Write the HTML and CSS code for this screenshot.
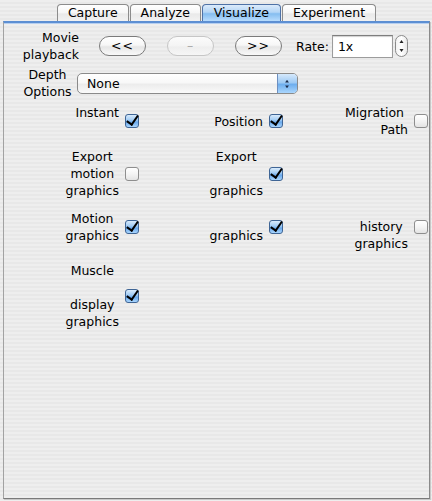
FILE: index.html
```html
<!DOCTYPE html>
<html>
<head>
<meta charset="utf-8">
<link rel="stylesheet" href="styles.css">
</head>
<body>
<div class="window">
  <div class="tabs">
    <div class="tab">Capture</div>
    <div class="tab">Analyze</div>
    <div class="tab tab-active">Visualize</div>
    <div class="tab">Experiment</div>
  </div>
  <div class="panel">
    <div class="row-movie">
      <div class="lbl movie-lbl">Movie<br>playback</div>
      <button class="pill first">&lt;&lt;</button>
      <button class="pill disabled">–</button>
      <button class="pill">&gt;&gt;</button>
      <span class="rate-lbl">Rate:</span>
      <div class="field">1x</div>
      <div class="stepper">
        <svg width="13" height="22" viewBox="0 0 13 22">
          <rect x="0.5" y="0.5" width="12" height="21" rx="6" fill="url(#stepg)" stroke="#8a8a8a"/>
          <defs><linearGradient id="stepg" x1="0" y1="0" x2="1" y2="0"><stop offset="0" stop-color="#f2f2f2"/><stop offset="0.5" stop-color="#ffffff"/><stop offset="1" stop-color="#e6e6e6"/></linearGradient></defs>
          <path d="M4.5 8 L6.5 5 L8.5 8 Z" fill="#222"/>
          <path d="M4.5 14 L6.5 17 L8.5 14 Z" fill="#222"/>
        </svg>
      </div>
    </div>
    <div class="row-depth">
      <div class="lbl depth-lbl">Depth<br>Options</div>
      <div class="popup">
        <span class="popup-text">None</span>
        <span class="popup-arrows">
          <svg width="20" height="20" viewBox="0 0 20 20">
            <path d="M7.5 8.5 L9.5 5.5 L11.5 8.5 Z" fill="#1a2a4a"/>
            <path d="M7.5 11.5 L9.5 14.5 L11.5 11.5 Z" fill="#1a2a4a"/>
          </svg>
        </span>
      </div>
    </div>
    <div class="checks">
      <div class="check-row r1">
        <div class="cell"><span class="clbl">Instant<br>&nbsp;</span><span class="cb on"></span></div>
        <div class="cell"><span class="clbl">Position</span><span class="cb on"></span></div>
        <div class="cell"><span class="clbl right">Migration&nbsp;<br>Path</span><span class="cb"></span></div>
      </div>
      <div class="check-row r2">
        <div class="cell"><span class="clbl">Export<br>motion<br>graphics</span><span class="cb"></span></div>
        <div class="cell"><span class="clbl">Export<br>&nbsp;<br>graphics</span><span class="cb on"></span></div>
        <div class="cell"></div>
      </div>
      <div class="check-row r3">
        <div class="cell"><span class="clbl">Motion<br>graphics</span><span class="cb on"></span></div>
        <div class="cell"><span class="clbl">&nbsp;<br>graphics</span><span class="cb on"></span></div>
        <div class="cell"><span class="clbl">&nbsp;<br>history<br>graphics</span><span class="cb"></span></div>
      </div>
      <div class="check-row r4">
        <div class="cell"><span class="clbl">Muscle<br>&nbsp;<br>display<br>graphics</span><span class="cb on"></span></div>
        <div class="cell"></div>
        <div class="cell"></div>
      </div>
    </div>
  </div>
</div>
<svg width="0" height="0" style="position:absolute">
  <defs>
    <linearGradient id="x" x1="0" y1="0" x2="0" y2="1"><stop offset="0" stop-color="#fff"/></linearGradient>
  </defs>
</svg>
</body>
</html>
```

FILE: styles.css
```css
* { box-sizing: border-box; }
html, body { margin: 0; padding: 0; }
body {
  width: 432px;
  height: 501px;
  font-family: "DejaVu Sans", "Liberation Sans", sans-serif;
  font-size: 12.5px;
  color: #000;
  background: repeating-linear-gradient(to bottom, #eeeeee 0, #eeeeee 2px, #e8e8e8 2px, #e8e8e8 4px);
  overflow: hidden;
}
.window {
  display: flex;
  flex-direction: column;
  height: 501px;
}
.tabs {
  display: flex;
  justify-content: center;
  gap: 1px;
  padding-top: 4px;
  padding-left: 1px;
  height: 21px;
}
.tab {
  height: 17px;
  padding: 0 10px;
  border: 1px solid #8c8c8c;
  border-bottom: 0;
  border-radius: 4px 4px 0 0;
  background: linear-gradient(to bottom, #ffffff 0, #f6f6f6 50%, #e9e9e9 55%, #f2f2f2 100%);
  line-height: 16px;
  white-space: nowrap;
}
.tab-active {
  padding: 0 11px;
  border-color: #4f72a6;
  background: linear-gradient(to bottom, #dcebfb 0, #b3d5f6 45%, #85bdf0 55%, #b8dcfd 100%);
}
.panel {
  flex: 1;
  margin: 0 2px 2px 3px;
  border-top: 2px solid #5d8fd3;
  border-left: 1px solid #a2a2a2;
  border-right: 1px solid #8a8a8a;
  border-bottom: 1px solid #7a7a7a;
  box-shadow: inset 0 1px 0 #b6cff0, 1px 1px 0 #c8c8c8;
  padding-top: 6px;
}
.lbl { line-height: 17px; }
.row-movie {
  display: flex;
  align-items: center;
  height: 34px;
}
.movie-lbl {
  width: 75px;
  text-align: right;
}
.pill {
  width: 47px;
  height: 20px;
  margin-left: 21px;
  padding: 0;
  font: inherit;
  color: #000;
  border: 1px solid #7b7b7b;
  border-radius: 10px;
  background: linear-gradient(to bottom, #ffffff 0, #f7f7f7 45%, #e6e6e6 55%, #f9f9f9 100%);
  line-height: 18px;
  letter-spacing: 1px;
}
.pill.first { margin-left: 20px; }
.pill.disabled {
  color: #a8a8a8;
  border-color: #c6c6c6;
  background: linear-gradient(to bottom, #fbfbfb 0, #f4f4f4 50%, #eeeeee 55%, #f6f6f6 100%);
}
.rate-lbl { margin-left: 14px; }
.field {
  width: 61px;
  height: 23px;
  margin-left: 3px;
  padding-left: 5px;
  background: #fff;
  border: 1px solid #9c9c9c;
  border-top-color: #7e7e7e;
  box-shadow: inset 0 1px 1px #d0d0d0;
  line-height: 21px;
}
.stepper {
  display: flex;
  margin-left: 2px;
}
.row-depth {
  display: flex;
  align-items: center;
  height: 34px;
  margin-top: 3px;
}
.depth-lbl {
  width: 49px;
  margin-left: 19px;
  text-align: center;
}
.popup {
  display: flex;
  align-items: center;
  width: 221px;
  height: 21px;
  margin-left: 5px;
  border: 1px solid #8a8a8a;
  border-radius: 5px;
  background: linear-gradient(to bottom, #ffffff 0, #f8f8f8 45%, #ececec 55%, #fafafa 100%);
  overflow: hidden;
}
.popup-text {
  flex: 1;
  padding-left: 9px;
  line-height: 19px;
}
.popup-arrows {
  display: flex;
  width: 20px;
  height: 19px;
  background: linear-gradient(to bottom, #d6e9fc 0, #9ecaf4 45%, #6eaeee 55%, #aad6fd 100%);
  border-left: 1px solid #6d8fc0;
}
.checks {
  margin-top: 4px;
}
.check-row {
  display: grid;
  grid-template-columns: 135px 144px 145px;
}
.r2 { margin-top: 10px; }
.r3 { margin-top: 2px; }
.r4 { margin-top: 10px; }
.cell {
  display: flex;
  justify-content: flex-end;
  align-items: center;
  gap: 6px;
}
.clbl {
  text-align: center;
  line-height: 17px;
}
.clbl.right { text-align: right; }
.cb {
  position: relative;
  flex: none;
  width: 14px;
  height: 14px;
  border: 1px solid #8e8e8e;
  border-radius: 3px;
  background: linear-gradient(to bottom, #ffffff 0, #f4f4f4 50%, #e4e4e4 100%);
}
.cb.on {
  border-color: #3f6595;
  background: linear-gradient(to bottom, #d9ebfc 0, #a4cdf4 40%, #6aa9ec 60%, #a9d5fd 100%);
}
.cb.on::after {
  content: "";
  position: absolute;
  left: 3px;
  top: -2px;
  width: 5px;
  height: 10px;
  border-right: 2.5px solid #000;
  border-bottom: 2.5px solid #000;
  transform: rotate(35deg);
  transform-origin: center;
}
```
